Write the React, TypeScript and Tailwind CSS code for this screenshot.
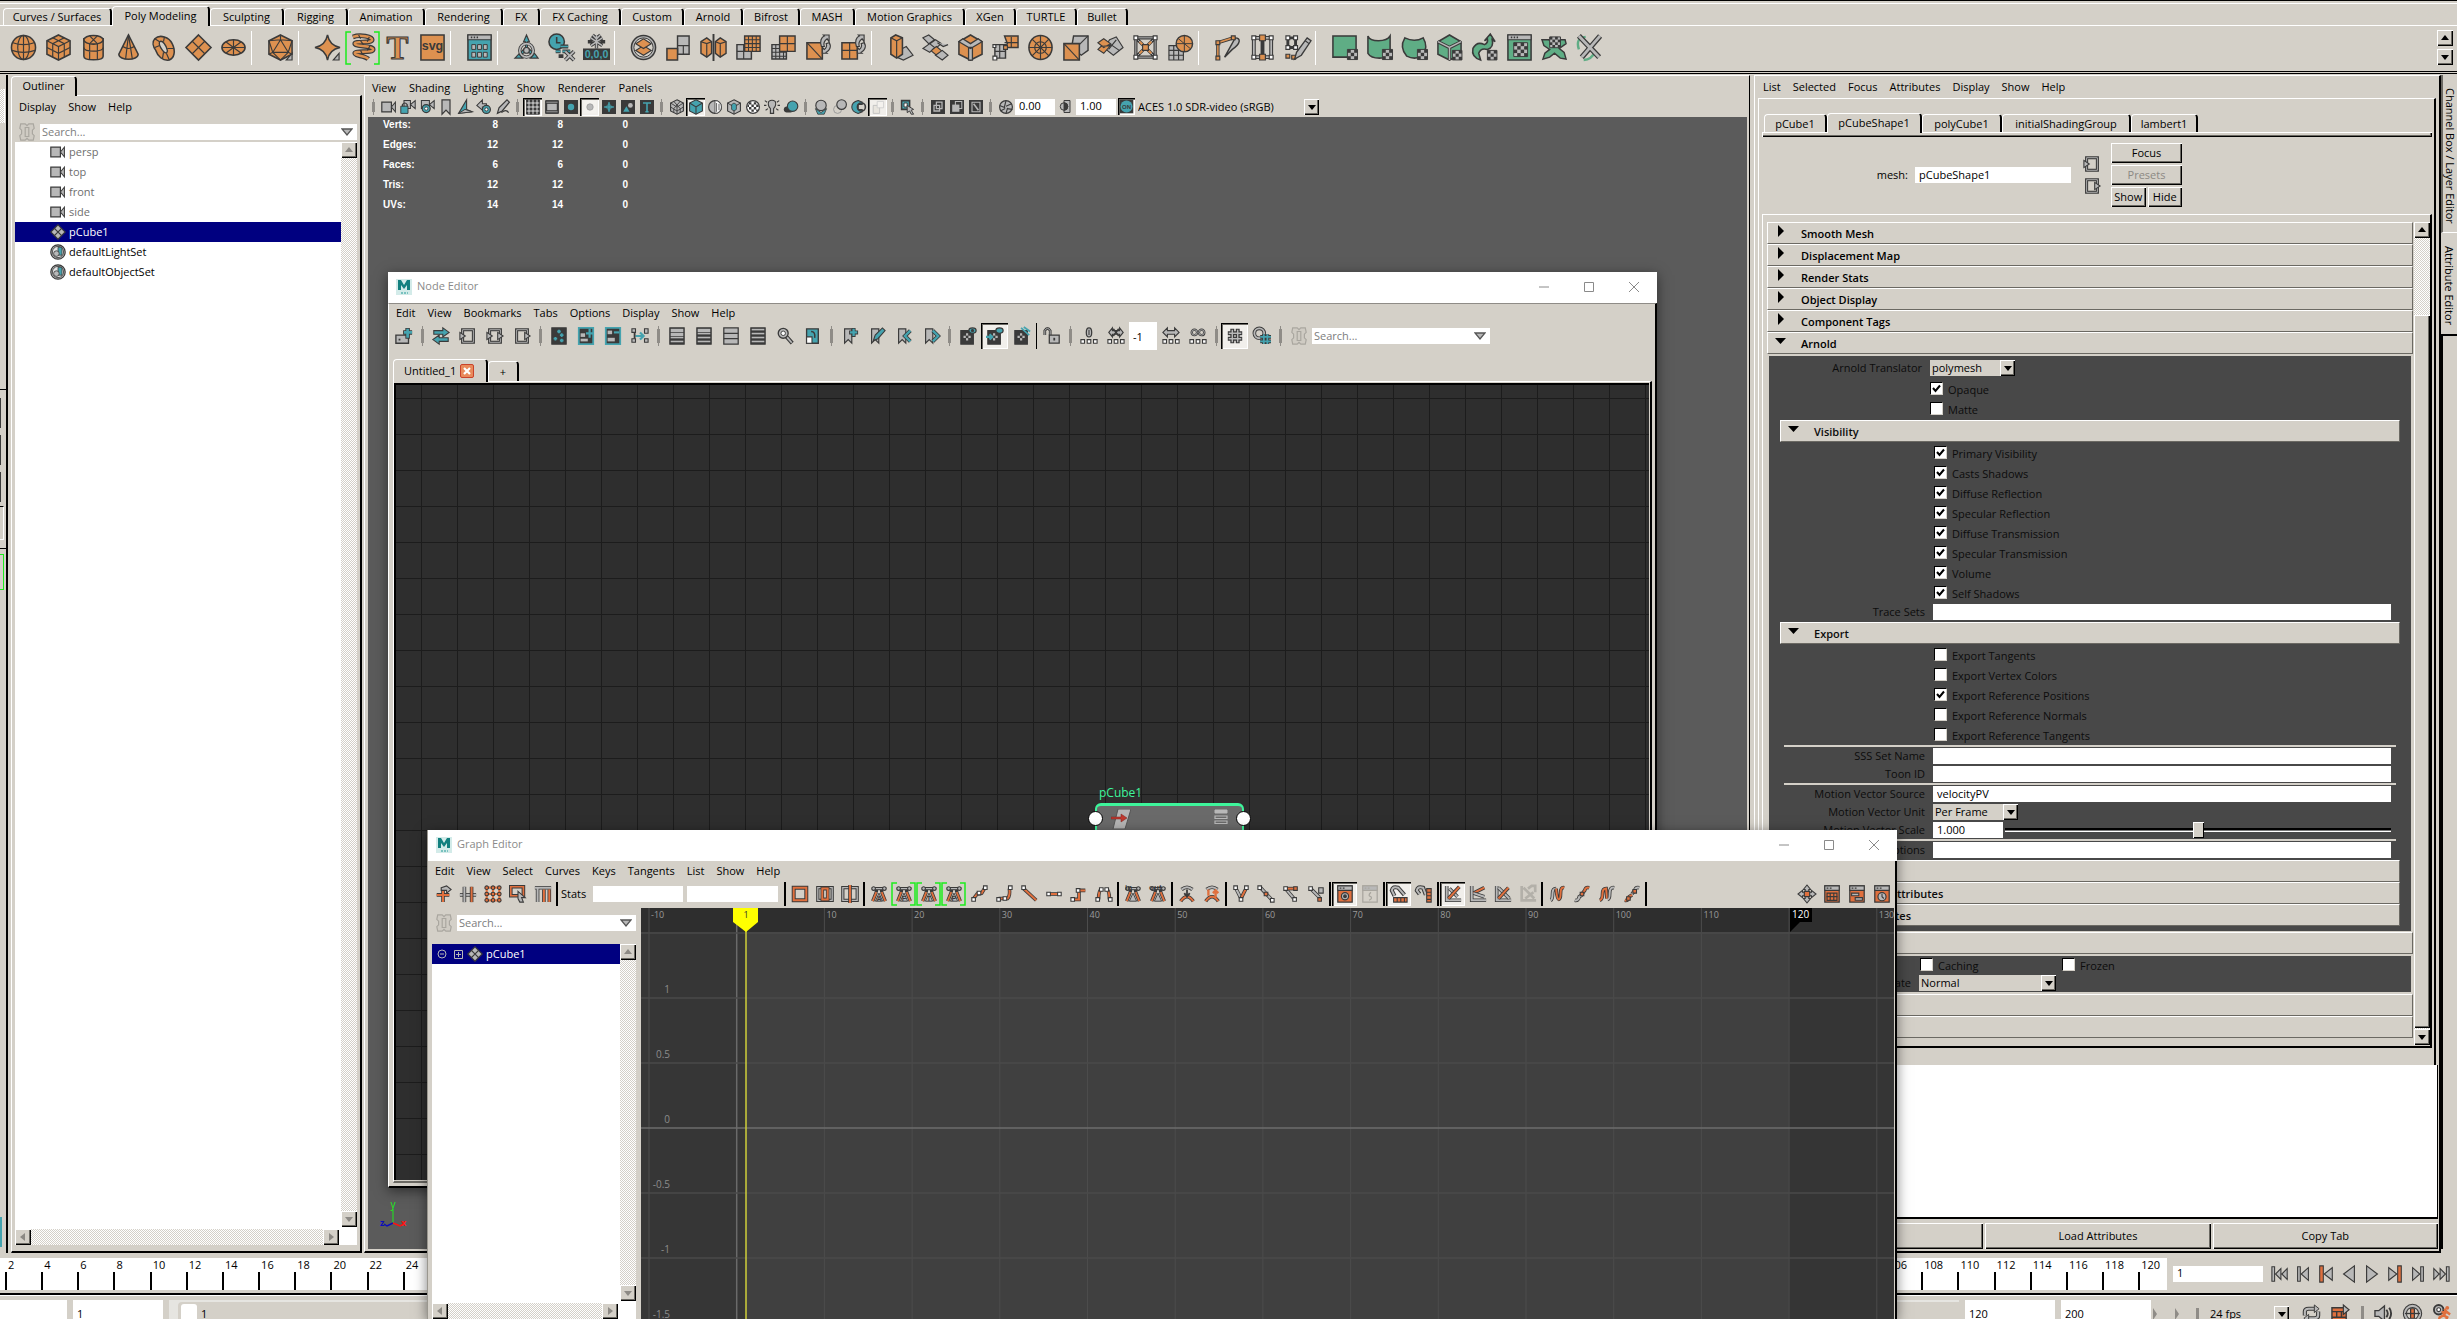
import React from "react";

/* ---------- palette for the drawings ---------- */
const O = "#dd9150";
const T = "#45a3af";
const G = "#b8b8b8";
const D = "#3a3a3a";
const N = "#5fad85";
const R = "#e0703e";
const W = "#ffffff";
const X = "none";

type Shape = [string, string?, string?, number?] | { t: string; x: number; y: number; s: number; f: string; serif?: boolean };

const c = (x: number, y: number, r: number, ry = r) =>
  `M${x - r} ${y}a${r} ${ry} 0 1 0 ${2 * r} 0a${r} ${ry} 0 1 0 ${-2 * r} 0Z`;
const b = (x: number, y: number, w: number, h: number) => `M${x} ${y}h${w}v${h}h${-w}Z`;

const checker = (x: number, y: number, n: number, k: number): Shape[] => {
  const out: Shape[] = [[b(x, y, n * k, n * k), G, D, 1]];
  for (let i = 0; i < n; i++)
    for (let j = 0; j < n; j++) if ((i + j) % 2 === 0) out.push([b(x + i * k, y + j * k, k, k), D, X]);
  return out;
};
const corner: Shape = ["M26 20V27H20Z", G, D, 1.2];
const redo: Shape[] = [
  ["M17 13C15 8 17 3 20 2L19 1H25V8L23 5C20 7 19 10 20 13Z", G, D, 1.2],
  ["M25 9C28 13 25 18 22 19L23 20H18V14L20 16C22 15 23 12 22 10Z", G, D, 1.2],
];
const win = (col: string): Shape[] => [
  [b(2, 1, 24, 26), col, D, 1.6],
  [b(2, 1, 24, 5), G, D, 1.2],
  ["M5 3.5h1.5M8 3.5h1.5M11 3.5h1.5", X, D, 1.6],
];

const shelf: Record<string, Shape[]> = {
  sphere: [[c(14, 14, 12.5), O, D, 1.6], [c(14, 14, 6, 12.5), X], ["M3 9Q14 13 25 9M2 17Q14 21 26 17M14 2V26", X]],
  cube: [["M14 1L26 7V21L14 27L2 21V7Z", O, D, 1.6], ["M2 7L14 13L26 7M14 13V27M8 4L20 10V24M20 4L8 10V24M2 14L14 20L26 14", X]],
  cylinder: [["M4 5V23C4 28 24 28 24 23V5Z", O, D, 1.6], [c(14, 6, 10, 4.5), O, D, 1.6], ["M4 14C4 19 24 19 24 14M10 10V27M18 10V27M10 2L18 10M18 2L10 10", X]],
  cone: [["M14 1L4 21C4 28 24 28 24 21Z", O, D, 1.6], ["M14 1L11 26M14 1L18 26M8 13Q14 17 20 13", X]],
  torus: [["M5 5C10 0 20 3 23 10C27 18 25 25 20 27C13 28 8 23 6 17C3 13 2 8 5 5Z", O, D, 1.6], ["M10 8C13 6 17 12 18 17C18 21 15 20 13 17C10 13 9 10 10 8Z", "#d4d0c8", D, 1.4], ["M5 5L10 8M15 3L14 8M25 15L18 15M13 25L14 19M20 27L17 20M5 14L10 12", X]],
  plane: [["M14 1L27 14L14 27L1 14Z", O, D, 1.6], ["M7.500 7.500L20.500 20.500M20.500 7.500L7.500 20.500", X]],
  disc: [[c(14, 14, 12, 8), O, D, 1.6], ["M2 14H26M14 6V22M6 8L22 20M22 8L6 20", X]],
  platonic: [["M14 1L26 7V21L14 27L2 21V7Z", O, D, 1.6], ["M14 6L22 19H6ZM14 1V6M2 7L14 6L26 7L22 19L26 21M6 19L2 21M2 7L6 19L14 27L22 19", X], corner],
  superstar: [["M14 1Q16 12 27 14Q16 16 14 27Q12 16 1 14Q12 12 14 1Z", O, D, 1.6], corner],
  helix: [["M4 3C12 0 24 3 24 6C24 10 6 7 6 10C6 13 25 12 25 16C25 20 6 17 6 20C6 23 16 22 20 26", X, D, 5], ["M4 3C12 0 24 3 24 6C24 10 6 7 6 10C6 13 25 12 25 16C25 20 6 17 6 20C6 23 16 22 20 26", X, O, 2.6], ["M10 1L12 5M21 3L19 8M12 7L15 11M22 12L19 17M12 17L14 21", X, D, 1.2]],
  type: [{ t: "T", x: 14, y: 26, s: 34, f: O, serif: true }],
  svg: [[b(2, 1, 24, 26), O, D, 1.6], { t: "svg", x: 14, y: 17, s: 13, f: D }],
  sweep: [...win(T), ...[0, 1, 2].flatMap((i) => [0, 1].map((j): Shape => [b(6 + i * 6, 11 + j * 8, 4, 5), G, D, 1]))],
  center: [["M14 1L11 8H13V14L5 22L2 25H10L7 22L14 18L21 22L18 25H26L23 21L15 14V8H17Z", T, D, 1.2], [c(14, 17, 7), X, D, 3.5], [c(14, 17, 7), X, G, 1.8], [c(14, 17, 3), G, D]],
  history: [[c(9, 8, 8), T, D, 1.6], ["M9 3V9H13", X, D, 1.6], ["M13 13H21M8 18H13M15 18H23M11 23H16", X, D, 4], ["M13 13H21M8 18H13M15 18H23", X, T, 1.6], ["M18 18L27 27M27 18L18 27", X, D, 4], ["M18 18L27 27M27 18L18 27", X, G, 2]],
  freeze: [["M14 1V15M8 4L20 12M20 4L8 12M10 1L14 5L18 1M5 8L10 8M23 8H18", X, D, 3.5], ["M14 1V15M8 4L20 12M20 4L8 12M10 1L14 5L18 1", X, G, 1.6], [b(0, 15, 28, 12), D, X], { t: "0,0,0", x: 14, y: 25, s: 11, f: T }],
  combine: [[c(14, 14, 12.5), G, D, 1.6], [c(14, 14, 10), "#d4d0c8", D, 1], ["M6 17L14 12L22 17L14 22Z", O, D], ["M6 10L14 5L22 10L14 15Z", O, D]],
  separate: [[b(13, 2, 12, 19), G, D, 1.5], ["M13 12H25M19 12V21", X], [b(2, 15, 11, 12), O, D, 1.6]],
  mirror: [["M1 8L7 4L12 8V20L7 24L1 20Z", O, D, 1.5], ["M7 10V24M1 8L7 10L12 8", X], ["M27 8L21 4L16 8V20L21 24L27 20Z", O, D, 1.5], ["M21 10V24M27 8L21 10L16 8", X], ["M14 0V28", X, D, 2]],
  smooth: [[b(2, 11, 15, 15), G, D, 1.5], ["M9 11V26M2 18H17", X], [b(10, 2, 16, 16), O, D, 1.5], ["M14 2V18M18 2V18M22 2V18M10 6H26M10 10H26M10 14H26", X, D, 1.1]],
  reduce: [[b(2, 11, 15, 15), G, D, 1.5], ["M6 11V26M10 11V26M14 11V26M2 15H17M2 19H17M2 23H17", X, D, 1.1], [b(10, 2, 16, 16), O, D, 1.5], ["M18 2V18M10 10H26", X]],
  remesh: [[b(2, 9, 16, 17), O, D, 1.6], ["M2 9L18 26", X], ...redo],
  retopo: [[b(2, 9, 16, 17), O, D, 1.6], ["M10 9V26M2 17H18", X], ...redo],
  extrude: [["M14 16L20 13L27 22L17 27L10 24Z", G, D], ["M4 4L9 1L16 4V21L10 25L4 21Z", O, D, 1.6], ["M4 4L10 7L16 4M10 7V25", X]],
  bridge: [["M1 4L7 1L13 6L7 10ZM7 11L14 6L20 10L14 15Z", G, D], ["M9 17L15 13L21 18L15 22Z", O, D], ["M14 22L21 17L27 22L21 27ZM1 15L8 10L13 14L8 19ZM16 9L22 13L27 11", G, D]],
  bevel: [["M14 1L26 8V21L14 27L2 21V8Z", O, D, 1.6], ["M2 8L14 15L26 8L22 5L14 10L6 5ZM12 14H16V27H12Z", G, D, 1.3]],
  merge: [["M13 2H27V14H13L16 10Z", O, D, 1.5], ["M20 3V14M13 9H27", X], [b(3, 11, 11, 14), G, D, 1.5], ["M8 11V25M3 18H14", X], [b(1, 23, 4, 4), W, D], [b(12, 12, 4, 4), O, D], [b(1, 11, 3, 3), W, D]],
  circularize: [[c(14, 14, 12, 12.5), O, D, 1.6], [c(14, 14, 6), X], ["M2 14H26M14 2V26M5 5L23 23M23 5L5 23", X]],
  quad: [["M12 2H27V17L20 22L10 14Z", G, D, 1.5], ["M27 2L12 17", X], [b(2, 10, 16, 17), O, D, 1.6], ["M2 10L18 27", X]],
  flip: [["M13 6L20 3L27 14L17 22L8 15Z", G, D], ["M13 10L23 17M20 6L12 16", X], ["M1 9L7 5L14 10L7 14ZM1 16L4 13L14 12L7 20Z", O, D]],
  poke: [["M4 4H24V24H4ZM4 4L24 24M24 4L4 24", X, D, 3.4], ["M4 4H24V24H4ZM4 4L24 24M24 4L4 24", X, G, 1], ["M8 8L20 20M20 8L8 20", X, O, 2], ...[[4, 4], [24, 4], [4, 24], [24, 24]].map(([x, y]): Shape => [b(x - 2, y - 2, 4, 4), W, D]), [b(11, 11, 6, 6), O, D]],
  wedge: [[b(2, 12, 15, 15), G, D], ["M7 12V27M12 12V27M2 17H17M2 22H17", X], [c(18, 10, 8.5), O, D, 1.5], ["M18 2V18M10 10H26M12 5L24 15", X, D, 1]],
  multicut: [["M4 24V9L20 4", X, D, 3.5], ["M4 24V9L20 4", X, O, 1.6], ["M11 24L22 4C28 4 28 10 19 16Z", G, D, 1.5], [b(2, 23, 4, 4), O, D], [b(2, 7, 4, 4), O, D], [b(18, 2, 4, 4), O, D]],
  target: [["M3 4H25M3 24H25M5 4V24M14 4V24M23 4V24", X, D, 4], ["M3 4H25M3 24H25M5 4V24M23 4V24", X, G, 1.8], ...[5, 23].flatMap((x) => [4, 24].map((y): Shape => [b(x - 2, y - 2, 4, 4), W, D])), [b(11, 1, 6, 6), O, D], [b(11, 21, 6, 6), O, D]],
  sculpt: [["M4 4H12V14H4Z", X, D, 3], [b(2, 2, 4, 4), W, D], [b(10, 2, 4, 4), W, D], [b(2, 12, 4, 4), W, D], [b(10, 12, 4, 4), W, D], [b(2, 21, 4, 4), O, D], [b(8, 22, 4, 4), O, D], ["M11 26L13 19L24 4L28 7L18 22Z", G, D, 1.4], ["M22 7L26 10", X]],
  uvplane: [[b(2, 2, 24, 22), N, D, 1.6], ...checker(17, 16, 3, 3.5)],
  uvcyl: [["M2 2Q4 7 13 7Q22 7 25 2V20Q22 25 14 25Q5 25 2 20Z", N, D, 1.6], ...checker(17, 16, 3, 3.5)],
  uvsph: [["M4 4Q14 9 23 4Q29 14 22 23Q14 27 6 23Q-2 14 4 4Z", N, D, 1.6], ...checker(17, 16, 3, 3.5)],
  uvauto: [["M14 1L26 8V21L14 27L2 21V8Z", N, D, 1.6], ["M2 8L14 14L26 8M14 14V27", X, D, 3.5], ["M2 8L14 14L26 8M14 14V27", X, G, 1.5], ...checker(17, 17, 3, 3.3)],
  uvcont: [["M2 15Q6 7 14 11Q18 9 17 5L14 7L20 0L25 8L22 6Q24 14 17 16Q10 14 8 20L10 27Q0 24 2 15Z", N, D, 1.6], ...checker(17, 17, 3, 3.3)],
  uveditor: [...win(N), ...checker(8, 9, 4, 3.6)],
  uvunfold: [["M4 20L2 26L9 24L14 20L20 25L26 26L24 19L19 15L26 10L25 6H19L14 12L8 6H1L3 12L9 16Z", N, D, 1.5], ...checker(9, 3, 4, 2.8)],
  uvcut: [["M3 16Q-1 4 10 3M8 27Q16 27 20 18", X, N, 2.5], ["M3 2L24 24M25 2L6 24", X, D, 5.5], ["M3 2L24 24M25 2L6 24", X, G, 3]],
};

const hole = (l: boolean, r: boolean): Shape[] => [
  ["M4 3H16V17H4Z", X, D, 3.4],
  ["M4 3H16V17H4Z", X, G, 1],
  ...(l ? ([["M1 6L7 10L1 14Z", G, D]] as Shape[]) : []),
  ...(r ? ([["M13 6L19 10L13 14Z", G, D]] as Shape[]) : []),
];
const box = (f = D): Shape => [b(2, 2, 16, 16), f, D, 1.5];
const list = (n: number): Shape[] => [
  [b(2, 1, 16, 18), D, D, 1.2],
  ...[0, 1, 2, 3].map((i): Shape => [b(3, 2 + i * 4.4, 14, i < n ? 3.6 : 1.8), G, X]),
];
const mark = "M4 2H12V18L8 14L4 18Z";
const eye: Shape[] = [[b(2, 4, 14, 15), D, D], ["M9 7V15M5 11H13", X, G, 2.4], [c(9, 11, 1.6), D, X]];
const chain: Shape[] = [[b(1, 14, 4, 4), W, D], [b(8, 14, 4, 4), W, D], [b(15, 14, 4, 4), W, D]];
const gwin = (f: string, op = D): Shape[] => [[b(2, 1, 16, 18), f, op, 1.4], [b(2, 1, 16, 5), G, op, 1.2], ["M4 3.500H6M7.500 3.500H9.500", X, op, 1.6]];
const k = (x: number, y: number, f = W): Shape => [b(x - 2, y - 2, 4, 4), f, D, 1.2];
const ln = (d: string, col = R): Shape[] => [[d, X, D, 4], [d, X, col, 2.2]];
const tang = (s: string): Shape[] => [
  ["M2 4H18M3 18L7 8M17 18L13 8M7 8V4M13 4V8", X, D, 3.8], ["M3 18L7 8M17 18L13 8", X, R, 2], ["M5 4H15", X, G, 1.4], [c(4, 4, 2), G, D], [c(16, 4, 2), G, D], ["M6 18L10 9L14 18Z", G, D, 1],
  { t: s, x: 10, y: 18, s: 8, f: D },
];

const tool: Record<string, Shape[]> = {
  cam: [[b(1, 4, 12, 12), G, D, 1.5], ["M13 10L18 4V16Z", G, D, 1.3]],
  camlock: [["M5 2H13V12H5ZM13 7L19 2V12Z", G, D, 1.3], ["M3 10V7Q6 3 9 7V10", X, D, 1.5], [b(1, 9, 9, 9), T, D, 1.2]],
  camgear: [["M3 2H13V12H3ZM13 7L19 2V12Z", G, D, 1.3], [c(9, 12, 5), T, D, 1.5], [c(9, 12, 2), W, D, 1]],
  bookmark: [["M5 1H15V19L10 14L5 19Z", G, D, 1.5]],
  image: [["M2 18L12 1V13L19 16Z", T, D, 1.4], ["M2 18L10 13L19 16Z", G, D, 1.2]],
  pan: [["M8 1L1 8L8 14V10H13V6H8Z", G, D, 1.3], [c(13, 13, 5), T, D, 1.5], [c(13, 13, 2), W, D]],
  pencil: [["M3 18L5 11L15 1L18 4L9 15Z", G, D, 1.5], ["M8 17Q14 12 17 17", X, D, 1.5]],
  grid: [[b(2, 1, 16, 18), D, D], ["M5 1V19M10 1V19M15 1V19M2 5H18M2 10H18M2 15H18", X, W, 1]],
  film: [[b(2, 2, 16, 16), D, D], [b(4, 6, 12, 8), G, X], ["M3 4H17M3 16H17", X, G, 1]],
  res: [box(), [c(10, 10, 4), T, X]],
  gate: [[b(2, 2, 16, 16), "#f4f2ee", X], [c(10, 10, 4), G, "#999", 1]],
  field: [box(), ["M10 4V16M4 10H16", X, T, 2], [c(10, 10, 3), X, T, 1]],
  safe: [box(), ["M4 16L8 9L12 16Z", T, X], [c(13, 8, 3), G, X]],
  textb: [box(), ["M5 5H15M10 5V16M8 16H12", X, T, 2]],
  wcube: [["M10 1L18 5V15L10 19L2 15V5Z", G, D, 1.4], ["M2 5L10 10L18 5M10 10V19M6 3L14 12V17M14 3L6 12V17M2 10L10 15L18 10", X, D, 1.1]],
  tcube: [["M10 1L18 5V15L10 19L2 15V5Z", T, D, 1.4], ["M2 5L10 10L18 5M10 10V19", X, D, 1.3]],
  half: [[c(10, 10, 8), G, D, 1.5], ["M10 2A8 8 0 0 1 10 18Z", W, D, 1], ["M12 5V16M15 6V14", X, D, 1]],
  texcube: [["M10 1L18 5V15L10 19L2 15V5Z", G, D, 1.4], ["M2 5L10 10L18 5M10 10V19", X], ["M7 7L10 5L13 7V13L10 15L7 13Z", T, D, 1]],
  checks: [[c(10, 10, 8), W, D, 1.5], ["M5 4H8V7H5ZM11 4H14V7H11ZM8 7H11V10H8ZM14 7H17V10H14ZM3 7H5V10H3ZM5 10H8V13H5ZM11 10H14V13H11ZM8 13H11V16H8ZM14 13H16V15H14Z", D, X]],
  bulb: [["M6 3Q10 0 14 3Q16 8 12 12V18H8V12Q4 8 6 3Z", G, D, 1.4], ["M1 2L4 4M0 8H3M19 2L16 4M20 8H17M2 14L5 12M18 14L15 12", X, D, 1.4]],
  shadow: [[c(7, 13, 6, 4), D, X], [c(12, 9, 6.5), T, D, 1.4]],
  ao: [["M3 12L10 17L17 12L14 19H6Z", T, D, 1], [c(10, 8, 6.5), G, D, 1.4]],
  blur: [[c(7, 13, 5), "#d4d0c8", "#999", 1.2], [c(12, 7, 6), G, D, 1.4]],
  aa: [["M9 2L14 4V7H9V13H14V16L9 18Q1 16 1 10Q1 4 9 2Z", T, D, 1.3], [c(13, 10, 5), X, D, 2]],
  fade: [[b(4, 8, 8, 10), "#e8e5de", "#bbb", 1], [b(9, 3, 8, 8), "#f4f2ee", "#ccc", 1]],
  select: [[b(2, 2, 10, 11), T, D, 2], [b(5, 5, 4, 5), W, D], ["M9 8L17 13L14 14L17 19L14 19L12 15L9 17Z", G, D, 1.2]],
  iso1: [box(), [b(8, 4, 7, 8), X, G, 1.6], [b(5, 8, 7, 7), X, G, 1.6]],
  iso2: [box(), [b(8, 3, 8, 9), D, G, 1.3], [b(4, 7, 9, 9), G, X]],
  iso3: [box(), [b(5, 4, 10, 12), X, G, 1.4], ["M7 6L13 14", X, G, 2]],
  shutter: [[c(10, 10, 8), G, D, 1.5], ["M10 2L8 10M17 6L10 9M18 13L11 12M10 18L12 11M3 15L9 12M2 8L9 11", X, D, 1.4]],
  contrast: [[b(8, 2, 8, 16), G, D, 1.3], [c(8, 10, 5), G, D, 1.3], ["M8 5A5 5 0 0 1 8 15Z", D, D]],
  on: [[b(1, 1, 18, 18), D, X], [c(10, 10, 8), T, X], { t: "ON", x: 10, y: 13, s: 8, f: D }],
  create: [[b(1, 9, 14, 9), G, D, 1.5], ["M4 14H6", X, D, 2], ["M14 1V13M9 6H19", X, D, 5], ["M14 2V12M10 6H19", X, T, 3]],
  swap: [["M2 4H12V1L19 6L12 11V8H2Z", T, D, 1.2], ["M18 12H8V9L1 14L8 19V16H18Z", T, D, 1.2]],
  inn: hole(true, false), both: hole(true, true), out: hole(false, true),
  stars: [[b(2, 1, 16, 18), D, D], ["M10 3V7M8 5H12M13 7V11M11 9H15M6 11V15M4 13H8M13 13V17M11 15H15", X, T, 2]],
  addn: [[b(2, 1, 16, 18), D, T, 2], [b(4, 7, 5, 4), G, X], [b(4, 13, 8, 3), G, X], ["M14 2V12M10 7H18", X, T, 2.4]],
  remn: [[b(2, 1, 16, 18), D, T, 2], [b(4, 4, 5, 4), G, X], [b(4, 12, 8, 4), G, X], ["M11 6H17", X, T, 2.4]],
  conn: [[b(1, 2, 4, 4), G, D], [b(1, 13, 4, 4), G, D], [b(15, 2, 4, 5), G, D], [b(15, 13, 4, 4), G, D], ["M5 10H14M10 6L14 10L10 14", X, T, 2.4], ["M4 6V13", X, D, 2]],
  l1: list(2), l2: list(1), l3: [[b(2, 1, 16, 18), G, D, 1.4], ["M2 7H18M2 13H18", X, D, 1.4]], l4: list(0),
  mag: [["M11 10L18 18", X, D, 4.500], ["M12 11L17.500 17.500", X, G, 2], [c(8, 7, 5.5), G, D, 1.5], [c(8, 7, 2.500), W, D, 1]],
  frame: [[b(4, 2, 13, 16), T, D, 1.5], [b(4, 11, 6, 7), W, D], ["M9 5Q14 5 13 12", X, D, 1.6]],
  bmadd: [[mark, G, D, 1.3], ["M14 1V11M9 6H19", X, D, 4.4], ["M14 2V10M10 6H18", X, T, 2.6]],
  bmedit: [[mark, G, D, 1.3], ["M6 15L8 9L16 1L19 4L11 13Z", T, D, 1.2]],
  bmprev: [[mark, G, D, 1.3], ["M17 4L11 10L17 16", X, D, 4.4], ["M17 4L11 10L17 16", X, T, 2.6]],
  bmnext: [[mark, G, D, 1.3], ["M12 4L18 10L12 16", X, D, 4.4], ["M12 4L18 10L12 16", X, T, 2.6]],
  eye1: [...eye, [c(15, 4, 4, 3), T, D, 1.4], [c(15, 4, 1.2), D]],
  eye2: [...eye, [c(15, 4, 4, 3), T, D, 1.4], ["M0 11H6M4 8L7 11L4 14", X, T, 2.4]],
  eye3: [...eye, ["M9 1L18 9M12 0L19 5", X, T, 2]],
  lock: [["M2 9V4Q5 -1 8 4V9", X, D, 3], ["M2 9V4Q5 -1 8 4V9", X, G, 1], [b(7, 9, 11, 9), G, D, 1.4], ["M12.500 12V15", X, D, 2]],
  d1: [...chain, [c(10, 6, 3, 5), G, D, 1.4], ["M10 3V9", X, D]],
  d2: [...chain, ["M2 6L6 1V4H14V1L18 6L14 11V8H6V11Z", G, D, 1.2], ["M7 2L13 10M13 2L7 10", X, D, 1.6]],
  d3: [...chain, ["M1 6L6 1V4H14V1L19 6L14 11V8H6V11Z", G, D, 1.2]],
  d4: [...chain, [c(6, 6, 3), X, D, 2.6], [c(14, 6, 3), X, D, 2.6], [c(6, 6, 3), X, G, 1], [c(14, 6, 3), X, G, 1]],
  hash: [["M7 2V18M13 2V18M2 7H18M2 13H18", X, D, 4.4], ["M7 3V17M13 3V17M3 7H17M3 13H17", X, G, 1.6]],
  hash2: [[c(7, 7, 5.5), X, D, 4], [c(7, 7, 5.5), X, G, 2], ["M12 8V19M16 8V19M8 11H20M8 16H20", X, D, 4], ["M12 8V19M16 8V19M8 11H20M8 16H20", X, T, 2]],
  knot: [["M3 1H8L10 3L12 1H17L18 6L16 8V12L18 14L17 19H12L10 17L8 19H3L2 14L4 12V8L2 6ZM8 5L12 5V15H8Z", "#cfcbc3", "#a9a69f", 1.3]],
  g1: [...ln("M3 11H17M10 3V19"), ["M8 3L14 1L19 5L14 9V6H8Z", G, D, 1.2]],
  g2: [...ln("M1 11H19", G), ...ln("M6 2V19", G), ...ln("M14 2V19")],
  g3: [["M3 3H17V17H3ZM10 3V17M3 10H17", X, R, 2.4], ...[3, 10, 17].flatMap((x) => [3, 10, 17].map((y): Shape => [c(x, y, 2), R, D, 1.2]))],
  g4: [["M2 2H16V12H2Z", X, D, 4], ["M2 2H16V12H2Z", X, R, 1.8], ["M10 7L18 14H14L16 19L12 19L10 15Z", G, D, 1.2]],
  g5: [...ln("M1 3H19M4 3V19", G), ...ln("M11 5V19M17 5V19")],
  f1: [["M3 3H17V17H3Z", X, D, 4.4], ["M3 3H17V17H3Z", X, R, 2.2]],
  f2: [["M2 3H18V17H2Z", X, D, 3.6], ["M2 3H18V17H2Z", X, G, 1.4], ...ln("M7 4H13V16H7Z")],
  f3: [["M2 3H18V17H2Z", X, D, 3.6], ["M2 3H18V17H2Z", X, G, 1.4], ...ln("M10 0V20")],
  ta: tang("A"), tb: tang("F"), tc: tang("T"), td: tang("P"),
  t1: [...ln("M4 15L8 10L13 9L16 4"), k(4, 16), k(10, 9), k(17, 3)],
  t2: [...ln("M4 15H14Q17 12 16 4"), k(4, 16), k(11, 15), k(17, 3)],
  t3: [...ln("M4 4L18 17"), k(4, 3)],
  t4: [...ln("M4 10H16"), k(4, 10), k(16, 10)],
  t5: [...ln("M4 16H10V6H17"), k(3, 16), k(9, 6)],
  t6: [...ln("M4 16Q4 6 7 5M16 16Q16 6 13 5"), k(7, 5), k(13, 5), k(3, 16), k(17, 16)],
  tin: [...tang(""), { t: "in", x: 5, y: 6, s: 9, f: D }],
  tout: [...tang(""), { t: "out", x: 7, y: 6, s: 9, f: D }],
  br1: [...ln("M3 18Q10 8 17 18"), ...ln("M4 5Q10 0 16 5", G), ["M10 5V13M7 9L10 13L13 9", X, D, 2]],
  br2: [...ln("M3 18Q10 8 17 18"), ...ln("M4 5Q10 0 16 5", G), ["M6 5V12M14 14V6M11 9L14 6L17 9", X, R, 2.6]],
  w1: [...ln("M4 3L10 15", G), ...ln("M16 3L10 15"), k(4, 3), k(16, 3), k(10, 16)],
  w2: [...ln("M4 3L16 16", G), k(3, 3), k(10, 10, R), k(17, 17)],
  w3: [...ln("M4 4L14 16", G), ...ln("M4 4H16"), k(4, 4), k(15, 4, R), k(14, 16)],
  w4: [...ln("M4 4L14 14", G), k(4, 4), k(14, 16, R), [b(13, 3, 5, 6), G, D]],
  buf: [...gwin(R), [c(10, 12.500, 4), G, D, 1.3], [c(10, 12.500, 1.5), D]],
  buf2: [...gwin("#d4d0c8", "#a9a69f"), ["M11 8Q7 12 11 13Q13 15 9 17", X, "#a9a69f", 1.4]],
  mag1: [["M5 12L2 6Q3 1 9 3L16 11", X, D, 4.500], ["M5 12L2 6Q3 1 9 3L16 11", X, G, 2.2], ["M4 18V14H19V19H4ZM8 14V19M12 14V19M16 14V19", R, D, 1.2]],
  mag2: [["M5 10L2 6Q3 1 9 3L12 11", X, D, 4.500], ["M5 10L2 6Q3 1 9 3L12 11", X, G, 2.2], ["M13 4H18V19H13ZM13 8H18M13 12H18M13 16H18", R, D, 1.2]],
  ax1: [...ln("M3 1V17H19", G), ...ln("M6 4L15 13", G), ...ln("M5 15L17 2")],
  ax2: [...ln("M3 1V17H19", G), ...ln("M5 9L17 3"), ...ln("M5 9L17 13", G)],
  ax3: [...ln("M3 1V17H19", G), ...ln("M5 3L17 15", G), ...ln("M16 3L5 15")],
  ax4: [["M3 1V17H19M5 3L17 15M16 8L7 15M10 4L14 1H18V8", X, "#b3b0a9", 3]],
  s1: [...ln("M3 17Q5 16 5 10T9 4", G), ...ln("M9 4Q10 16 12 16T14 9T18 3")],
  s2: [...ln("M2 17Q6 18 7 13L10 11", G), ...ln("M10 10L13 6Q14 2 18 3"), k(10, 10, R)],
  s3: [...ln("M2 17Q5 16 5 10T9 4L10 15"), ...ln("M11 16Q13 16 13 9T18 3", G)],
  s4: [...ln("M2 17Q6 18 7 13L10 11"), ...ln("M10 10L13 6Q14 2 18 3", G), k(6, 15, R), k(13, 7, R)],
  move: [["M10 0L14 5H12V8H15V6L20 10L15 14V12H12V15H14L10 20L6 15H8V12H5V14L0 10L5 6V8H8V5H6Z", G, D, 1.2], [b(7, 7, 6, 6), R, D, 1.3]],
  ge1: [...gwin(R), [b(4.500, 9, 11, 8), X, D, 1.3], ["M8 9V17M12 9V17M4 13H16", X, D, 1.3]],
  ge2: [...gwin(R), [b(4, 9, 8, 3), G, D], [b(8, 14, 8, 3), G, D]],
  ge3: [...gwin(R), [c(10, 13, 4.500), G, D, 1.3], ["M10 10V13L12 15", X, D, 1.2]],
  tostart: [[b(1, 2, 3, 16), G, D, 1.2], ["M11 4V16L5 10ZM18 4V16L12 10Z", G, D, 1.2]],
  back: [[b(4, 2, 3, 16), G, D, 1.2], ["M16 3V17L8 10Z", G, D, 1.2]],
  backkey: [[b(3, 1, 4, 18), R, D, 1.2], ["M17 3V17L8 10Z", G, D, 1.2]],
  playb: [["M16 1V19L4 10Z", G, D, 1.3]], playf: [["M4 1V19L16 10Z", G, D, 1.3]],
  fwdkey: [[b(13, 1, 4, 18), R, D, 1.2], ["M3 3V17L12 10Z", G, D, 1.2]],
  fwd: [[b(13, 2, 3, 16), G, D, 1.2], ["M4 3V17L12 10Z", G, D, 1.2]],
  toend: [[b(16, 2, 3, 16), G, D, 1.2], ["M2 4V16L8 10ZM9 4V16L15 10Z", G, D, 1.2]],
  loop: [["M3 12V8Q3 5 7 5H13", X, D, 4.400], ["M17 8V12Q17 15 13 15H7", X, D, 4.400], ["M3 12V8Q3 5 7 5H14M17 8V12Q17 15 13 15H6", X, G, 2.2], ["M13 1L18 5L13 9ZM7 11L2 15L7 19Z", G, D, 1]],
  cache: [[b(1, 4, 15, 14), R, D, 1.5], ["M1 8H16M1 14H16M6 8V14M11 8V14", X, D, 1.5], ["M13 1L19 6L13 11Z", G, D]],
  audio: [["M1 7H5L11 2V18L5 13H1Z", G, D, 1.4], ["M13 6Q16 10 13 14M16 4Q20 10 16 16", X, D, 2]],
  autokey: [[c(10, 10, 8), X, D, 4.400], [c(10, 10, 8), X, G, 2.2], ["M8 5H12V15H8Z", R, D, 1.3], ["M2 10H18", X, D, 1.4]],
  prefs: [[c(6, 6, 5), G, D, 2], [c(6, 6, 2), W, D], ["M12 5L14 8L11 12L15 14L13 19M11 12L7 14L6 18M14 8L18 11M9 9L14 8", X, R, 2.6], [c(15, 4, 2), R, X]],
  mesh: [["M10 1L19 10L10 19L1 10Z", G, D, 1.400], ["M5.500 5.500L14.500 14.500M14.500 5.500L5.500 14.500", X, D, 1.5]],
  set: [[c(10, 10, 9), G, D, 1.5], [c(10, 10, 7), "#e4e4e4", D, 1], [b(10, 4, 5, 10), T, D, 1], [c(8, 12, 3.500), G, D, 1]],
};

function Icon({ name, size = 18, from = tool, box: vb = 20 }: { name: string; size?: number; from?: Record<string, Shape[]>; box?: number }) {
  return (
    <svg width={size} height={size} viewBox={`0 0 ${vb} ${vb}`} className="shrink-0 overflow-visible" aria-hidden="true">
      {(from[name] ?? []).map((s, i) =>
        Array.isArray(s) ? (
          <path key={i} d={s[0]} fill={s[1] ?? X} stroke={s[2] ?? D} strokeWidth={s[3] ?? 1.2} />
        ) : (
          <text key={i} x={s.x} y={s.y} fontSize={s.s} fill={s.f} fontWeight="bold" textAnchor="middle" stroke={s.serif ? D : undefined} strokeWidth={s.serif ? 1.2 : undefined} fontFamily={s.serif ? "Liberation Serif, serif" : "Liberation Sans, sans-serif"}>
            {s.t}
          </text>
        ),
      )}
    </svg>
  );
}

/* ---------- shared bevels ---------- */
const raised = "bg-[#d4d0c8] shadow-[inset_1px_1px_#fff,inset_-1px_-1px_#000,inset_-2px_-2px_#6b6963]";
const pressed = "bg-[#f1efeb] shadow-[inset_1px_1px_#000,inset_2px_2px_#6b6963,inset_-1px_-1px_#fff]";
const dither = "bg-[repeating-conic-gradient(#fff_0_25%,#d4d0c8_0_50%)] bg-[length:2px_2px]";

function Arrow({ dir, dim }: { dir: "up" | "down" | "left" | "right"; dim?: boolean }) {
  const d = { up: "M0 6L4 1L8 6Z", down: "M0 2L4 7L8 2Z", left: "M6 0L1 4L6 8Z", right: "M2 0L7 4L2 8Z" }[dir];
  return (
    <svg width="8" height="8" viewBox="0 0 8 8" aria-hidden="true">
      <path d={d} fill={dim ? "#8c8984" : "#000"} />
    </svg>
  );
}

function ArrowBtn({ dir, dim = false }: { dir: "up" | "down" | "left" | "right"; dim?: boolean }) {
  return (
    <button type="button" aria-label={`Scroll ${dir}`} className={`flex size-4 shrink-0 items-center justify-center ${raised}`}>
      <Arrow dir={dir} dim={dim} />
    </button>
  );
}

function Tab({ label, active, w, h = "h-[17px]" }: { label: string; active?: boolean; w: string; h?: string }) {
  return (
    <button
      type="button"
      className={`shrink-0 whitespace-nowrap rounded-t-sm border-l border-t border-r-2 border-l-white border-t-white border-r-black text-center ${w} ${
        active ? "relative z-10 -mb-px h-[20px] bg-[#d4d0c8] pb-px leading-[18px]" : `${h} leading-[16px]`
      }`}
    >
      {label}
    </button>
  );
}

function Menu({ items, className, gap = "gap-3" }: { items: string[]; className: string; gap?: string }) {
  return (
    <nav className={`flex shrink-0 leading-4 ${gap} ${className}`}>
      {items.map((m) => (
        <button key={m} type="button" className="whitespace-nowrap">
          {m}
        </button>
      ))}
    </nav>
  );
}

function Search({ className }: { className: string }) {
  return (
    <label className={`flex items-center ${className}`}>
      <span className="w-[22px]">
        <Icon name="knot" size={18} />
      </span>
      <span className="flex h-4 flex-1 items-center bg-white pr-1">
        <input aria-label="Search" placeholder="Search..." className="min-w-0 flex-1 bg-transparent px-0.5 leading-4 outline-none placeholder:text-[#7d7d7d]" />
        <svg width="12" height="8" viewBox="0 0 12 8" aria-hidden="true">
          <path d="M1 1H11L6 7Z" fill="#b8b8b8" stroke="#555" strokeWidth="1.300" />
        </svg>
      </span>
    </label>
  );
}

function Select({ id, options, className }: { id: string; options: string[]; className: string }) {
  return (
    <span className={`relative flex h-4 bg-[#d4d0c8] ${className}`}>
      <select id={id} aria-label={id} className="w-full appearance-none bg-transparent pl-0.5 leading-4 text-black outline-none">
        {options.map((o) => (
          <option key={o}>{o}</option>
        ))}
      </select>
      <span className={`pointer-events-none absolute right-0 top-0 flex h-4 w-[15px] items-center justify-center ${raised}`}>
        <Arrow dir="down" />
      </span>
    </span>
  );
}

/* ---------- shelf ---------- */
const shelfTabs: [string, string][] = [
  ["Curves / Surfaces", "w-[109px]"], ["Poly Modeling", "w-[98px]"], ["Sculpting", "w-[74px]"], ["Rigging", "w-[64px]"],
  ["Animation", "w-[77px]"], ["Rendering", "w-[78px]"], ["FX", "w-[37px]"], ["FX Caching", "w-[81px]"], ["Custom", "w-[63px]"],
  ["Arnold", "w-[59px]"], ["Bifrost", "w-[57px]"], ["MASH", "w-[55px]"], ["Motion Graphics", "w-[110px]"], ["XGen", "w-[51px]"],
  ["TURTLE", "w-[61px]"], ["Bullet", "w-[51px]"],
];
const shelfIcons =
  "sphere cube cylinder cone torus plane disc | platonic | superstar helix type svg | sweep | center history freeze | combine separate mirror smooth reduce remesh retopo | extrude bridge bevel merge circularize quad flip poke wedge | multicut target sculpt | uvplane uvcyl uvsph uvauto uvcont uveditor uvunfold uvcut".split(" ");

function Shelf() {
  return (
    <header className="flex h-[75px] shrink-0 flex-col border-t border-black">
      <div className="mt-0.5 flex h-[22px] items-end border-t border-white pl-[3px]">
        {shelfTabs.map(([t, w]) => (
          <Tab key={t} label={t} w={w} active={t === "Poly Modeling"} />
        ))}
      </div>
      <div className="flex flex-1 items-center justify-between border-b border-t border-b-black border-t-white pb-[2px] pl-[6px] pr-[4px]">
        <div className="flex items-center">
          {shelfIcons.map((n, i) =>
            n === "|" ? (
              <span key={i} className="mr-[11px] h-[34px] w-px bg-white" />
            ) : (
              <button key={i} type="button" aria-label={n} className="relative flex h-[34px] w-[35px] items-center justify-center">
                <Icon name={n} from={shelf} box={28} size={27} />
                {n === "helix" && (
                  <svg className="absolute inset-0" width="35" height="34" viewBox="0 0 35 34" aria-hidden="true">
                    <path d="M6 1H1V33H6M29 1H34V33H29" fill="none" stroke="#1dec1d" strokeWidth="1.500" />
                  </svg>
                )}
              </button>
            ),
          )}
        </div>
        <div className="flex flex-col gap-[3px]">
          <ArrowBtn dir="up" />
          <ArrowBtn dir="down" />
        </div>
      </div>
      <div className="mb-px mt-px h-px shrink-0 bg-black" />
    </header>
  );
}

/* ---------- outliner ---------- */
function Scrollers({ children }: { children: React.ReactNode }) {
  return (
    <div className="flex min-h-0 flex-1 flex-col bg-white">
      <div className="flex min-h-0 flex-1">
        <div className="flex-1">{children}</div>
        <div className={`flex w-4 flex-col justify-between ${dither}`}>
          <ArrowBtn dir="up" dim />
          <ArrowBtn dir="down" dim />
        </div>
      </div>
      <div className={`mr-[18px] mt-0.5 flex h-4 justify-between ${dither}`}>
        <ArrowBtn dir="left" dim />
        <ArrowBtn dir="right" dim />
      </div>
    </div>
  );
}

const nodes: [string, string, string][] = [
  ["persp", "cam", "text-[#6e6e6e]"], ["top", "cam", "text-[#6e6e6e]"], ["front", "cam", "text-[#6e6e6e]"], ["side", "cam", "text-[#6e6e6e]"],
  ["pCube1", "mesh", "bg-[#000080] text-white"], ["defaultLightSet", "set", ""], ["defaultObjectSet", "set", ""],
];

function Outliner() {
  return (
    <section aria-label="Outliner" className="ml-[2px] flex w-[351px] shrink-0 flex-col pt-[1px]">
      <div className="flex h-[19px] items-end">
        <Tab label="Outliner" w="w-[66px]" active />
      </div>
      <div className="flex min-h-0 flex-1 flex-col border-b-2 border-l border-r-2 border-t border-b-black border-l-white border-r-black border-t-white pb-[6px] pl-[3px] pr-[3px]">
        <Menu items={["Display", "Show", "Help"]} className="pl-[4px] pt-[3px]" />
        <Search className="mb-[1px] mt-[8px] h-[18px] pl-[3px]" />
        <Scrollers>
          <ul>
            {nodes.map(([n, ic, cl]) => (
              <li key={n} className={`flex h-5 items-center gap-[3px] pl-[35px] ${cl}`}>
                <Icon name={ic} size={16} />
                {n}
              </li>
            ))}
          </ul>
        </Scrollers>
      </div>
    </section>
  );
}

/* ---------- viewport ---------- */
const vpA = "| cam camlock camgear bookmark image pan pencil | *grid film res *gate field safe textb | wcube *tcube half texcube checks bulb shadow | ao blur aa *fade | select | iso1 iso2 iso3 | shutter".split(" ");

function Viewport() {
  const hud: [string, number, number, number][] = [["Verts:", 8, 8, 0], ["Edges:", 12, 12, 0], ["Faces:", 6, 6, 0], ["Tris:", 12, 12, 0], ["UVs:", 14, 14, 0]];
  return (
    <section aria-label="Viewport" className="ml-[2px] flex min-w-0 flex-1 flex-col border-b-2 border-l border-r border-t border-b-black border-l-white border-r-black border-t-white pb-[2px] pl-[3px] pr-[2px]">
      <Menu items={["View", "Shading", "Lighting", "Show", "Renderer", "Panels"]} gap="gap-[13px]" className="pl-[4px] pt-[4px]" />
      <div className="flex h-[21px] shrink-0 items-center">
        {vpA.map((n, i) =>
          n === "|" ? (
            <span key={i} className="mx-1 flex h-4 w-[3px] justify-center bg-[linear-gradient(#8f8c87,#8f8c87)] bg-[length:3px_10px] bg-center bg-no-repeat">
              <span className="w-px bg-[#8f8c87]" />
            </span>
          ) : (
            <button key={i} type="button" aria-label={n.replace("*", "")} className={`flex h-[18px] w-[19px] items-center justify-center ${n[0] === "*" ? pressed : ""}`}>
              <Icon name={n.replace("*", "")} size={16} />
            </button>
          ),
        )}
        <input aria-label="Exposure" defaultValue="0.00" className="h-4 w-10 bg-white px-1" />
        <span className="mx-[3px]">
          <Icon name="contrast" size={15} />
        </span>
        <input aria-label="Gamma" defaultValue="1.00" className="h-4 w-10 bg-white px-1" />
        <button type="button" aria-label="Color management" className={`ml-0.5 flex size-[17px] items-center justify-center ${pressed}`}>
          <Icon name="on" size={15} />
        </button>
        <Select id="View transform" options={["ACES 1.0 SDR-video (sRGB)"]} className="ml-px w-[183px]" />
      </div>
      <div className="flex flex-1 flex-col justify-between bg-[#5b5b5b]">
        <table className="-mt-[2px] ml-[15px] w-[245px] table-fixed text-[10px] font-bold leading-5 text-white [font-family:'Liberation_Sans',sans-serif]">
          <tbody>
            {hud.map((r) => (
              <tr key={r[0]} className="h-5">
                <th scope="row" className="w-[50px] text-left">{r[0]}</th>
                <td className="w-[65px] text-right">{r[1]}</td>
                <td className="w-[65px] text-right">{r[2]}</td>
                <td className="w-[65px] text-right">{r[3]}</td>
              </tr>
            ))}
          </tbody>
        </table>
        <svg width="32" height="32" viewBox="0 0 32 32" className="mb-[18px] ml-[11px] overflow-visible" aria-label="Axis">
          <path d="M14 24V10" stroke="#1dec1d" />
          <path d="M14 24L8 27L5 25" stroke="#0b0bbf" fill="none" strokeWidth="1.5" />
          <path d="M14 24L21 27L24 25" stroke="#f11" fill="none" strokeWidth="1.5" />
          <text x="14" y="9" fontSize="10" fill="#1dec1d" textAnchor="middle">y</text>
          <text x="1" y="27" fontSize="9" fill="#0b0bbf" fontWeight="bold">z</text>
          <text x="22" y="27" fontSize="9" fill="#f11" fontWeight="bold">x</text>
        </svg>
      </div>
    </section>
  );
}

/* ---------- attribute editor ---------- */
function Head({ label, open }: { label: string; open?: boolean }) {
  return (
    <button type="button" className="flex h-[22px] w-full shrink-0 items-center border-b border-l border-r border-t border-b-[#6b6963] border-l-white border-r-[#6b6963] border-t-white bg-[#d4d0c8] pt-[2px] text-left font-semibold leading-[18px]">
      <span className="w-[33px] pl-[7px]">
        <svg width="12" height="12" viewBox="0 0 12 12" aria-hidden="true" className="-mt-1.5">
          <path d={open ? "M0 3H11L5.500 9Z" : "M3 0L9 6L3 12Z"} />
        </svg>
      </span>
      {label}
    </button>
  );
}

function Check({ label, on, className = "" }: { label: string; on?: boolean; className?: string }) {
  return (
    <label className={`flex h-5 items-center gap-[5px] ${className}`}>
      <span className="relative -mt-1 flex">
        <input type="checkbox" defaultChecked={on} className="peer size-[13px] appearance-none border-b border-l border-r border-t border-b-[#d4d0c8] border-l-black border-r-[#d4d0c8] border-t-black bg-white" />
        <svg width="13" height="13" viewBox="0 0 13 13" className="pointer-events-none absolute hidden peer-checked:block" aria-hidden="true">
          <path d="M3 6L5.500 9L10 3.500" fill="none" stroke="#000" strokeWidth="2" />
        </svg>
      </span>
      {label}
    </label>
  );
}

function Field({ label, children }: { label: string; children: React.ReactNode }) {
  return (
    <div className="flex h-[18px] items-center">
      <label htmlFor={label} className="w-[155px] shrink-0 whitespace-nowrap pr-[8px] text-right">{label}</label>
      {children}
    </div>
  );
}

const wide = "h-4 mr-[20px] min-w-0 flex-1 bg-white px-1 text-black";
const push = `${raised} text-center leading-5`;

function AttributeEditor() {
  return (
    <section aria-label="Attribute Editor panel" className="ml-[4px] flex w-[687px] shrink-0 flex-col border-b-2 border-l border-r-2 border-t border-b-black border-l-white border-r-black border-t-white pb-[2px] pl-[3px] pr-[1px]">
      <Menu items={["List", "Selected", "Focus", "Attributes", "Display", "Show", "Help"]} className="pb-[3px] pl-[5px] pt-[3px]" />
      <div className="mr-[2px] flex h-[967px] shrink-0 flex-col border-l border-r-2 border-t border-l-white border-r-black border-t-white pl-[3px] pr-[2px]">
        <div className="flex h-[33px] items-end pl-[2px]">
          <Tab label="pCube1" w="w-[63px]" h="h-[18px]" />
          <Tab label="pCubeShape1" w="w-[95px]" active />
          <Tab label="polyCube1" w="w-[80px]" h="h-[18px]" />
          <Tab label="initialShadingGroup" w="w-[129px]" h="h-[18px]" />
          <Tab label="lambert1" w="w-[67px]" h="h-[18px]" />
        </div>
        <div className={`h-[5px] shrink-0 ${raised}`} />
        <div className="flex h-[77px] shrink-0 pt-[6px]">
          <label htmlFor="mesh" className="mt-[24px] w-[153px] pr-[7px] text-right">mesh:</label>
          <input id="mesh" defaultValue="pCubeShape1" className="mt-[24px] h-4 w-[156px] bg-white px-1" />
          <div className="ml-[12px] mt-[12px] flex w-[28px] flex-col gap-[4px]">
            <button type="button" aria-label="Input"><Icon name="inn" size={18} /></button>
            <button type="button" aria-label="Output"><Icon name="out" size={18} /></button>
          </div>
          <div className="grid w-[71px] grid-cols-2 content-start gap-[2px]">
            <button type="button" className={`col-span-2 h-5 ${push}`}>Focus</button>
            <button type="button" className={`col-span-2 h-5 text-[#8c8984] ${push}`}>Presets</button>
            <button type="button" className={`h-5 ${push}`}>Show</button>
            <button type="button" className={`h-5 ${push}`}>Hide</button>
          </div>
        </div>
        <div className="flex h-[834px] shrink-0 border-b-2 border-l border-r-2 border-t border-b-black border-l-white border-r-black border-t-white pb-[1px] pl-[4px] pt-[7px]">
          <div className="w-[646px] shrink-0">
            {["Smooth Mesh", "Displacement Map", "Render Stats", "Object Display", "Component Tags"].map((s) => (
              <Head key={s} label={s} />
            ))}
            <Head label="Arnold" open />
            <div className="ml-[2px] mr-[2px] mt-[2px] flex h-[575px] flex-col bg-[#484848] px-[11px] pt-[2px] text-[#0c0c0c]">
              <div className="flex h-5 items-center">
                <label htmlFor="Arnold Translator" className="w-[150px] pr-[8px] text-right">Arnold Translator</label>
                <Select id="Arnold Translator" options={["polymesh"]} className="w-[85px]" />
              </div>
              <div className="pl-[150px] pt-[2px]">
                <Check label="Opaque" on />
                <Check label="Matte" />
              </div>
              <Head label="Visibility" open />
              <div className="pl-[154px] pt-[2px]">
                {["Primary Visibility", "Casts Shadows", "Diffuse Reflection", "Specular Reflection", "Diffuse Transmission", "Specular Transmission", "Volume", "Self Shadows"].map((s) => (
                  <Check key={s} label={s} on />
                ))}
              </div>
              <div className="-ml-[2px] -mr-[11px] -mt-[1px] mb-[1px]">
                <Field label="Trace Sets"><input id="Trace Sets" className={wide} /></Field>
              </div>
              <Head label="Export" open />
              <div className="pl-[154px] pt-[2px]">
                {["Export Tangents", "Export Vertex Colors", "Export Reference Positions", "Export Reference Normals", "Export Reference Tangents"].map((s) => (
                  <Check key={s} label={s} on={s.endsWith("Positions")} />
                ))}
              </div>
              <div className="-ml-[2px] -mr-[11px] mb-[1px]">
                <hr className="ml-[6px] mr-[15px] -mt-px h-[2px] border-0 bg-[#d4d0c8]" />
                <Field label="SSS Set Name"><input id="SSS Set Name" className={wide} /></Field>
                <Field label="Toon ID"><input id="Toon ID" className={wide} /></Field>
                <hr className="ml-[6px] mr-[15px] h-[2px] border-0 bg-[#d4d0c8]" />
                <Field label="Motion Vector Source"><input id="Motion Vector Source" defaultValue="velocityPV" className={wide} /></Field>
                <Field label="Motion Vector Unit"><Select id="Motion Vector Unit" options={["Per Frame"]} className="w-[85px]" /></Field>
                <Field label="Motion Vector Scale">
                  <input id="Motion Vector Scale" defaultValue="1.000" className="mr-[2px] h-4 w-[70px] bg-white px-1 text-black" />
                  <input
                    type="range"
                    aria-label="Motion Vector Scale slider"
                    defaultValue="50"
                    className="mr-[20px] h-4 min-w-0 flex-1 appearance-none bg-[linear-gradient(#0000_6px,#000_6px,#000_8px,#777_8px,#777_9px,#fff_9px,#fff_10px,#0000_10px)] [&::-webkit-slider-thumb]:h-4 [&::-webkit-slider-thumb]:w-[11px] [&::-webkit-slider-thumb]:appearance-none [&::-webkit-slider-thumb]:bg-[#d4d0c8] [&::-webkit-slider-thumb]:shadow-[inset_1px_1px_#fff,inset_-1px_-1px_#000]"
                  />
                </Field>
                <hr className="ml-[6px] mr-[15px] h-[2px] border-0 bg-[#d4d0c8]" />
                <Field label="User Options"><input id="User Options" className={wide} /></Field>
              </div>
              <Head label="Subdivision" />
              <Head label="Displacement Attributes" />
              <Head label="Volume Attributes" />
            </div>
            <div className="mt-[1px]"><Head label="Node Behavior" open /></div>
            <div className="mx-[2px] mb-[2px] mt-[2px] h-[36px] bg-[#484848] text-[#0c0c0c]">
              <div className="flex h-[19px] pl-[151px]">
                <Check label="Caching" className="w-[142px]" />
                <Check label="Frozen" />
              </div>
              <div className="flex h-4 items-center">
                <label htmlFor="Node State" className="w-[150px] pr-[8px] text-right">Node State</label>
                <Select id="Node State" options={["Normal"]} className="w-[137px]" />
              </div>
            </div>
            <Head label="UUID" />
            <Head label="Extra Attributes" />
          </div>
          <div className={`ml-[1px] flex w-[17px] flex-col ${dither}`}>
            <ArrowBtn dir="up" />
            <div className={`mb-[1px] mt-[77px] flex-1 ${raised}`} />
            <ArrowBtn dir="down" />
          </div>
        </div>
      </div>
      <textarea aria-label="Notes" className="mb-[4px] min-h-0 flex-1 resize-none border-b-2 border-r border-black bg-white outline-none" />
      <div className="flex h-[26px] shrink-0 gap-[2px]">
        {["Select", "Load Attributes", "Copy Tab"].map((s) => (
          <button key={s} type="button" className={`flex-1 ${raised}`}>{s}</button>
        ))}
      </div>
    </section>
  );
}

/* ---------- floating windows ---------- */
function TitleBar({ title }: { title: string }) {
  return (
    <div className="flex h-[31px] shrink-0 items-center bg-white pb-[2px] pl-[8px] pr-[17px] text-[12px] text-[#8a8a8a]">
      <svg width="16" height="16" viewBox="0 0 16 16" aria-hidden="true" className="mr-[5px]">
        <rect width="16" height="16" fill="#d3ebe9" />
        <path d="M2 11V1H5L8 6L11 1H14V11H11V6L8 10L5 6V11Z" fill="#12807f" />
        <path d="M5 14H12" stroke="#5cb5b1" strokeWidth="1.500" strokeDasharray="2 1" />
      </svg>
      <span className="flex-1 text-[11px]">{title}</span>
      <div className="flex gap-[33px]">
        {["M1 6H11", "M1.500 1.500H10.500V10.500H1.500Z", "M1 1L11 11M11 1L1 11"].map((d, i) => (
          <button key={d} type="button" aria-label={["Minimize", "Maximize", "Close"][i]}>
            <svg width="12" height="12" viewBox="0 0 12 12"><path d={d} fill="none" stroke="#8a8a8a" /></svg>
          </button>
        ))}
      </div>
    </div>
  );
}

function NodeTools({ names }: { names: string }) {
  return (
    <>
      {names.split(" ").map((n, i) =>
        n === "|" ? (
          <span key={i} className="mx-[3px] flex h-5 w-1 justify-center bg-[linear-gradient(#8f8c87,#8f8c87)] bg-[length:3px_14px] bg-center bg-no-repeat">
            <span className="w-px bg-[#8f8c87]" />
          </span>
        ) : (
          <button key={i} type="button" aria-label={n.replace("*", "")} className={`flex h-[26px] w-[27px] shrink-0 items-center justify-center ${n[0] === "*" ? pressed : ""}`}>
            <Icon name={n.replace("*", "")} size={18} />
          </button>
        ),
      )}
    </>
  );
}

function NodeEditor() {
  return (
    <section aria-label="Node Editor" className="absolute left-[388px] top-[272px] flex h-[916px] w-[1269px] flex-col bg-[#d4d0c8] shadow-[0_3px_12px_rgba(0,0,0,0.5)]">
      <TitleBar title="Node Editor" />
      <div className="flex min-h-0 flex-1 flex-col border-b-2 border-l border-r-2 border-t border-b-black border-l-white border-r-black border-t-[#8f8c87] pb-[3px] pl-[4px] pr-[3px]">
        <Menu items={["Edit", "View", "Bookmarks", "Tabs", "Options", "Display", "Show", "Help"]} className="pl-[3px] pt-[1px]" />
        <div className="-ml-[3px] flex h-[30px] items-center">
          <NodeTools names="create | swap inn both out | stars addn remn conn | l1 l2 l3 l4 mag frame" />
          <span className="w-px" />
          <NodeTools names="| bmadd bmedit bmprev bmnext | eye1 *eye2 eye3" />
          <span className="mx-px h-[26px] w-px bg-black" />
          <NodeTools names="lock | d1 d2" />
          <input aria-label="Traversal depth" defaultValue="-1" className="h-[28px] w-[28px] bg-white px-1" />
          <NodeTools names="d3 d4 | *hash hash2 |" />
          <Search className="ml-[5px] w-[200px]" />
        </div>
        <div className="flex h-[30px] items-end">
          <div className="relative z-10 -mb-px flex h-[23px] w-[95px] items-center gap-1 rounded-t-sm border-l border-r-2 border-t border-l-white border-r-black border-t-white bg-[#d4d0c8] pl-[10px]">
            Untitled_1
            <button type="button" aria-label="Close tab" className="flex size-[14px] items-center justify-center rounded-[2px] border border-[#c9432b] bg-[#e98a5b] text-[11px] font-bold leading-none text-white">
              <svg width="8" height="8" viewBox="0 0 8 8"><path d="M1 1L7 7M7 1L1 7" stroke="#fff" strokeWidth="2.200" /></svg>
            </button>
          </div>
          <Tab label="+" w="w-[31px]" h="h-[20px]" />
        </div>
        <div className="flex min-h-0 flex-1 border-b-2 border-l border-r-2 border-t border-b-[#6b6963] border-l-white border-r-black border-t-white py-px pr-px">
          <div className="relative flex-1 overflow-hidden border-l-2 border-t-2 border-black bg-[#2e2e2e] bg-[linear-gradient(90deg,#1c1c1c_1px,transparent_1px),linear-gradient(#1c1c1c_1px,transparent_1px)] bg-[length:36px_36px] bg-[position:25px_13px]">
            <div className="absolute left-[699px] top-[398px] w-[149px]">
              <div className="pl-1 text-[12px] leading-5 text-[#3ef59b]">pCube1</div>
              <div className="relative flex h-24 justify-between rounded-t-md border-2 border-t-[3px] border-[#3ef59b] bg-[#6a6a6a] px-[14px] pt-[3px]">
                <svg width="20" height="20" viewBox="0 0 20 20" aria-hidden="true">
                  <path d="M7 0H20L14 20H2Z" fill="#b5b5b5" stroke="#555" />
                  <path d="M0 8H10V5L16 9L10 13V10H0Z" fill="#c0392f" stroke="#7a2420" strokeWidth="0.500" />
                </svg>
                <svg width="14" height="16" viewBox="0 0 14 16" aria-hidden="true">
                  <path d="M1 1H13V4H1Z" fill="#b8b8b8" stroke="#b8b8b8" />
                  <path d="M1 7H13V9.500H1ZM1 12H13V14.500H1Z" fill="none" stroke="#b8b8b8" strokeWidth="1.200" />
                </svg>
                <span className="absolute -left-[9px] top-[5px] size-[15px] rounded-full border border-black bg-white" />
                <span className="absolute -right-[9px] top-[5px] size-[15px] rounded-full border border-black bg-white" />
              </div>
            </div>
          </div>
        </div>
      </div>
    </section>
  );
}

const green = ["tb", "tc", "td"];
function GraphTools({ names }: { names: string }) {
  return (
    <>
      {names.split(" ").map((n, i) =>
        n === "|" ? (
          <span key={i} className="mx-px h-6 w-[2px] bg-black" />
        ) : (
          <button key={i} type="button" aria-label={n.replace("*", "")} className={`relative flex h-6 w-[25px] shrink-0 items-center justify-center ${n[0] === "*" ? pressed : ""}`}>
            <Icon name={n.replace("*", "")} size={18} />
            {green.includes(n) && (
              <svg className="absolute inset-0" width="25" height="24" viewBox="0 0 25 24" aria-hidden="true">
                <path d="M6 1H1V23H6M19 1H24V23H19" fill="none" stroke="#1dec1d" strokeWidth="1.500" />
              </svg>
            )}
          </button>
        ),
      )}
    </>
  );
}

function Graph() {
  const xs = Array.from({ length: 15 }, (_, i) => ({ v: i * 10 - 10, x: 8 + i * 87.7 }));
  const ys = [1.5, 1, 0.5, 0, -0.5, -1, -1.5].map((v, i) => ({ v, y: 25 + i * 65 }));
  return (
    <svg className="h-full min-w-0 flex-1 bg-[#404040]" aria-label="Animation curves">
      <rect width="105" height="100%" fill="#363636" />
      <rect x="1148" width="400" height="100%" fill="#353535" />
      <rect width="100%" height="24" fill="#2e2e2e" />
      {xs.map(({ v, x }) => (
        <g key={v}>
          <path d={`M${x} 0V420`} stroke={v === 0 ? "#6a6a6a" : "#4c4c4c"} strokeWidth={v === 0 ? 1.5 : 1} />
          {v !== 120 && v !== 0 && <text x={x + 2} y="10" fontSize="9" fill="#9b9b9b">{v}</text>}
        </g>
      ))}
      {ys.map(({ v, y }) => (
        <g key={v}>
          <path d={`M0 ${y}H1300`} stroke={v === 0 ? "#6c6c6c" : "#4a4a4a"} strokeWidth="1.500" />
          {v !== 1.5 && <text x="29" y={y - 5} fontSize="10" fill="#8c8c8c" textAnchor="end">{v}</text>}
        </g>
      ))}
      <path d="M105 20V420" stroke="#cfcf3a" strokeWidth="1.500" />
      <path d="M92 0H117V14L105 24L92 14Z" fill="#ff0" />
      <text x="105" y="10" fontSize="9" fill="#333" textAnchor="middle">1</text>
      <path d="M1149 0H1171V14H1159L1149 24Z" fill="#000" />
      <text x="1151" y="10" fontSize="10" fill="#fff">120</text>
    </svg>
  );
}

function GraphEditor() {
  return (
    <section aria-label="Graph Editor" className="absolute bottom-0 left-[427px] top-[830px] flex w-[1470px] flex-col border-l border-[#9a978f] bg-[#d4d0c8] shadow-[0_3px_12px_rgba(0,0,0,0.5)]">
      <TitleBar title="Graph Editor" />
      <div className="flex min-h-0 flex-1 flex-col border-r-2 border-black pr-[1px]">
        <Menu items={["Edit", "View", "Select", "Curves", "Keys", "Tangents", "List", "Show", "Help"]} className="pl-[7px] pt-[2px]" />
        <div className="flex h-[29px] shrink-0 items-center pl-[2px] pt-px">
          <GraphTools names="g1 g2 g3 g4 g5 |" />
          <span className="w-[34px] pl-[2px]">Stats</span>
          <input aria-label="Stats time" className="mr-1 h-4 w-[90px] bg-white" />
          <input aria-label="Stats value" className="mr-[5px] h-4 w-[91px] bg-white" />
          <GraphTools names="| f1 f2 f3 | ta tb tc td t1 t2 t3 t4 t5 t6 | tin tout | br1 br2 | w1 w2 w3 w4 | *buf buf2 | *mag1 mag2 | *ax1 ax2 ax3 ax4 | s1 s2 s3 s4 |" />
          <span className="flex-1" />
          <GraphTools names="move ge1 ge2 ge3" />
        </div>
        <div className="flex min-h-0 flex-1">
          <div className="flex w-[208px] shrink-0 flex-col pl-[4px] pt-[6px]">
            <Search className="mb-[12px] h-[18px] w-[205px] pl-[3px] pr-px" />
            <Scrollers>
              <div className="flex h-5 items-center bg-[#000080] pl-[5px] text-white">
                <svg width="28" height="12" viewBox="0 0 28 12" fill="none" stroke="#b8b8b8" className="mr-[2px]" aria-hidden="true">
                  <circle cx="5" cy="6" r="4" />
                  <path d="M3 6H7M17.500 2.500H25.500V10.500H17.500ZM19 6.500H24M21.500 4V9" />
                </svg>
                <Icon name="mesh" size={16} />
                <span className="pl-[3px]">pCube1</span>
              </div>
            </Scrollers>
          </div>
          <span className="w-[5px] shrink-0" />
          <Graph />
        </div>
      </div>
    </section>
  );
}

/* ---------- time and range sliders ---------- */
function TimeSlider() {
  return (
    <div className="flex h-[42px] shrink-0 items-center border-b-2 border-black pt-[1px]">
      <div className="flex h-[32px] flex-1 overflow-hidden bg-white">
        <div className="-mr-[7px] ml-[5px] flex flex-1 bg-white">
          {Array.from({ length: 60 }, (_, i) => (
            <div key={i} className="flex min-w-0 flex-1 flex-col">
              <span className="h-[14px] pl-[3px] leading-[13px]">{i * 2 + 2}</span>
              <span className="w-[2px] flex-1 bg-black" />
            </div>
          ))}
        </div>
      </div>
      <input aria-label="Current frame" defaultValue="1" className="ml-[6px] h-4 w-[90px] bg-white px-1" />
      <div className="ml-[5px] mr-[4px] flex w-[185px]">
        {["tostart", "back", "backkey", "playb", "playf", "fwdkey", "fwd", "toend"].map((n) => (
          <button key={n} type="button" aria-label={n} className="flex flex-1 justify-center">
            <Icon name={n} size={18} />
          </button>
        ))}
      </div>
    </div>
  );
}

function RangeSlider() {
  const num = "h-[27px] w-[90px] shrink-0 bg-white px-1";
  return (
    <div className="flex h-[24px] shrink-0 items-start overflow-hidden border-t border-white pt-[4px]">
      <input aria-label="Animation start" className="mr-[6px] h-[27px] w-[67px] bg-white" />
      <input aria-label="Range start" defaultValue="1" className={num} />
      <div className="ml-[6px] mr-[6px] h-[27px] flex-1 bg-[#e6e5e1] pl-[9px] pt-[2px]">
        <div className="flex h-[24px] items-center gap-1 rounded-l bg-[#d4d0c8] pl-[3px]">
          <span className="h-5 w-4 rounded-[3px] bg-white" />1
        </div>
      </div>
      <input aria-label="Range end" defaultValue="120" className={`mr-[6px] ${num}`} />
      <input aria-label="Animation end" defaultValue="200" className={`mr-[2px] ${num}`} />
      <div className="flex h-[27px] w-[304px] items-center">
        <svg width="50" height="20" viewBox="0 0 50 20" aria-hidden="true">
          <path d="M0 4L4 10L0 16ZM22 4L26 10L22 16ZM43 4H46V16H43Z" fill="#8f8c87" />
        </svg>
        <Select id="24 fps" options={["24 fps"]} className="ml-[5px] w-[81px]" />
        <span className="flex flex-1 items-center justify-around pl-[8px]">
          <Icon name="loop" size={19} />
          <Icon name="cache" size={19} />
          <span className="h-4 w-[3px] bg-[#8f8c87]" />
          <Icon name="audio" size={19} />
          <Icon name="autokey" size={19} />
          <Icon name="prefs" size={19} />
        </span>
      </div>
    </div>
  );
}

export default function App() {
  return (
    <div className="relative flex h-screen flex-col overflow-hidden bg-[#d4d0c8] text-[11px] text-black [font-family:'Open_Sans','Noto_Sans',sans-serif]">
      <Shelf />
      <main className="flex min-h-0 flex-1">
        <div className="mr-px flex w-2 shrink-0 flex-col border-r-2 border-black pt-[14px]">
          <div className={`h-[34px] w-[5px] border-r border-white ${dither}`} />
          <div className="mt-[266px] h-px bg-black" />
          <div className="mt-[8px] flex flex-col gap-[7px]">
            <span className="h-[30px] w-px bg-[#3a3a3a]" />
            <span className="h-[30px] w-px bg-[#3a3a3a]" />
            <span className="h-[30px] w-px bg-[#3a3a3a]" />
          </div>
          <div className="mt-[4px] h-[34px] w-[4px] border-b border-r border-t border-b-white border-r-white border-t-black" />
          <div className="mt-[8px] h-px bg-black" />
          <div className="mt-[5px] h-[36px] w-[4px] border-b border-r border-t border-[#1dec1d]" />
          <div className="mt-[627px] h-[30px] w-[2px] bg-[#45a3af]" />
        </div>
        <Outliner />
        <Viewport />
        <AttributeEditor />
        <div className="flex w-[16px] shrink-0 flex-col leading-[14px] [&>button]:[writing-mode:vertical-rl]">
          <button type="button" className="h-[158px] whitespace-nowrap border-b border-l-2 border-b-white border-l-[#6b6963] pt-[13px] text-left">Channel Box / Layer Editor</button>
          <button type="button" className="h-[103px] whitespace-nowrap border-b-2 border-black pt-[13px] text-left">Attribute Editor</button>
          <div className="mb-1 flex-1 border-l-2 border-black" />
        </div>
      </main>
      <TimeSlider />
      <RangeSlider />
      <NodeEditor />
      <GraphEditor />
    </div>
  );
}
